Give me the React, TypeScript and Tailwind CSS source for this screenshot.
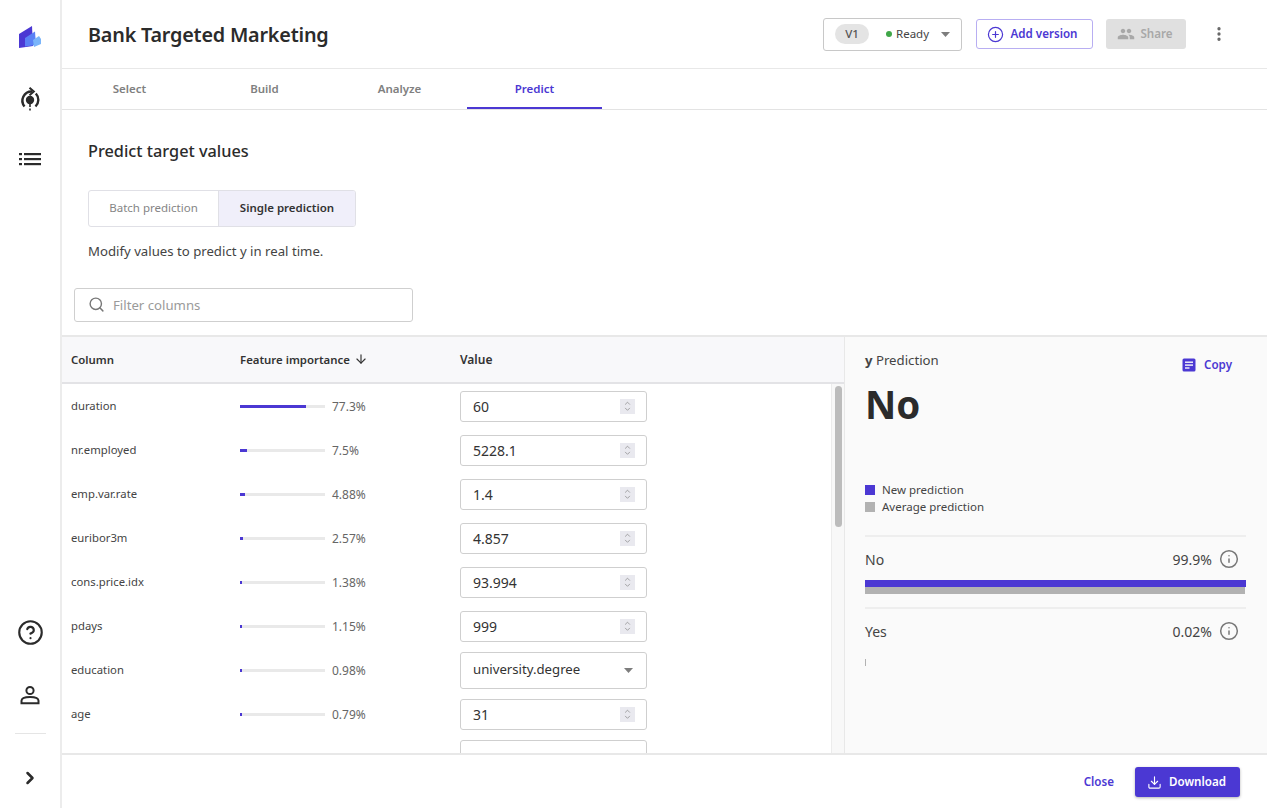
import { ChevronDown, ChevronRight, ChevronUp, CircleHelp, Download, EllipsisVertical, Info, Search, ArrowDown, CirclePlus } from 'lucide-react'

const rows = [
  { name: 'duration', pct: '77.3%', fill: 'w-[66px]', value: '60' },
  { name: 'nr.employed', pct: '7.5%', fill: 'w-[7px]', value: '5228.1' },
  { name: 'emp.var.rate', pct: '4.88%', fill: 'w-[5px]', value: '1.4' },
  { name: 'euribor3m', pct: '2.57%', fill: 'w-[3px]', value: '4.857' },
  { name: 'cons.price.idx', pct: '1.38%', fill: 'w-[2px]', value: '93.994' },
  { name: 'pdays', pct: '1.15%', fill: 'w-[2px]', value: '999' },
  { name: 'education', pct: '0.98%', fill: 'w-[2px]', value: 'university.degree', select: true },
  { name: 'age', pct: '0.79%', fill: 'w-[2px]', value: '31' },
]

function Logo() {
  return (
    <svg width="24" height="24" viewBox="0 0 24 24">
      <polygon points="1,9 14,1 15,21 1,23" fill="#4b38d3" />
      <polygon points="7,13 17,6.5 18,20 7,21.5" fill="#5a81f5" />
      <polygon points="15,15 21,11 23,14 23,19 16,22" fill="#7ab5fa" />
    </svg>
  )
}

function ModelIcon() {
  return (
    <svg width="24" height="24" viewBox="0 0 24 24" fill="none" stroke="#2b2b2b" strokeWidth="2.4">
      <path d="M6.5 19.5 A9.2 9.2 0 0 1 14 4.5" />
      <path d="M17.8 6.5 A9.2 9.2 0 0 1 17.5 19.5" />
      <path d="M11.5 0.8 L15.8 4.6 L11.5 8.2" strokeWidth="2" />
      <circle cx="12" cy="13" r="4.2" fill="#2b2b2b" stroke="none" />
      <path d="M12 16 V20 M12 21.5 V23.5" strokeWidth="1.6" />
    </svg>
  )
}

function ListIcon() {
  return (
    <svg width="22" height="14" viewBox="0 0 22 14" fill="#2b2b2b">
      <rect x="0" y="1" width="3" height="2.2" />
      <rect x="5" y="1" width="17" height="2.2" />
      <rect x="0" y="6" width="3" height="2.2" />
      <rect x="5" y="6" width="17" height="2.2" />
      <rect x="0" y="11" width="3" height="2.2" />
      <rect x="5" y="11" width="17" height="2.2" />
    </svg>
  )
}

function UserIcon() {
  return (
    <svg width="20" height="20" viewBox="0 0 20 20" fill="none" stroke="#2b2b2b" strokeWidth="2">
      <circle cx="10" cy="5.5" r="3.6" />
      <path d="M1.5 18.2 V15.8 C1.5 13.2 6 12 10 12 C14 12 18.5 13.2 18.5 15.8 V18.2 Z" />
    </svg>
  )
}

function PeopleIcon() {
  return (
    <svg width="18" height="18" viewBox="0 0 24 24" fill="#a8a8a8">
      <path d="M16 11c1.66 0 2.99-1.34 2.99-3S17.66 5 16 5c-1.66 0-3 1.34-3 3s1.34 3 3 3zm-8 0c1.66 0 2.99-1.34 2.99-3S9.66 5 8 5C6.34 5 5 6.34 5 8s1.34 3 3 3zm0 2c-2.33 0-7 1.17-7 3.5V19h14v-2.5c0-2.33-4.67-3.5-7-3.5zm8 0c-.29 0-.62.02-.97.05 1.16.84 1.97 1.97 1.97 3.45V19h6v-2.5c0-2.33-4.67-3.5-7-3.5z" />
    </svg>
  )
}

function CopyIcon() {
  return (
    <svg width="14" height="14" viewBox="0 0 14 14">
      <rect x="0.5" y="0.5" width="13" height="13" rx="1.5" fill="#4b38d3" />
      <rect x="3" y="3.5" width="8" height="1.4" fill="#fafafa" />
      <rect x="3" y="6.4" width="8" height="1.4" fill="#fafafa" />
      <rect x="3" y="9.3" width="4.5" height="1.4" fill="#fafafa" />
    </svg>
  )
}

function Caret({ className }: { className: string }) {
  return (
    <svg width="9" height="5" viewBox="0 0 9 5" className={className}>
      <polygon points="0,0 9,0 4.5,5" fill="#7d7d7d" />
    </svg>
  )
}

function ValueInput({ value }: { value: string }) {
  return (
    <div className="flex h-[31px] w-[187px] items-center justify-between rounded-[3px] border border-[#cfcfcf] bg-white pr-[11px] pl-3 text-[14px] text-[#333]">
      <span>{value}</span>
      <span className="flex h-[15px] w-[15px] flex-col items-center justify-center bg-[#e9e9ef] text-[#7a7a7a]">
        <ChevronUp size={9} strokeWidth={1.8} className="-mb-px" />
        <ChevronDown size={9} strokeWidth={1.8} className="-mt-px" />
      </span>
    </div>
  )
}

function ValueSelect({ value }: { value: string }) {
  return (
    <div className="flex h-[37px] w-[187px] items-center justify-between rounded-[3px] border border-[#cfcfcf] bg-white pr-3 pl-3 text-[13.2px] text-[#333]">
      <span>{value}</span>
      <Caret className="mr-px" />
    </div>
  )
}

function Row({ row }: { row: (typeof rows)[number] }) {
  return (
    <div className="flex h-[44px] shrink-0 items-center pl-[9px] text-[#444]">
      <div className="w-[169px] text-[11.3px]">{row.name}</div>
      <div className="flex w-[220px] items-center">
        <div className="h-[3px] w-[85px] bg-[#e9e9e9]">
          <div className={`h-[3px] bg-[#4b38d3] ${row.fill}`} />
        </div>
        <span className="ml-[7px] pt-[2px] text-[12px] text-[#666]">{row.pct}</span>
      </div>
      {row.select ? <ValueSelect value={row.value} /> : <ValueInput value={row.value} />}
    </div>
  )
}

function Prediction({ label, pct }: { label: string; pct: string }) {
  return (
    <div className="flex h-[42px] items-center justify-between pt-[2px] pr-[7px] text-[14px] text-[#444]">
      <span>{label}</span>
      <span className="flex items-center gap-[7px]">
        {pct}
        <Info size={20} strokeWidth={1.8} className="text-[#777]" />
      </span>
    </div>
  )
}

export default function App() {
  return (
    <div className="flex h-[808px] w-[1267px] overflow-hidden bg-white font-['Noto_Sans',sans-serif] text-[#2b2b2b]">
      <aside className="flex w-[62px] shrink-0 flex-col items-center border-r-2 border-[#ececec] pt-[25px]">
        <Logo />
        <div className="mt-[38px]"><ModelIcon /></div>
        <div className="mt-[41px]"><ListIcon /></div>
        <div className="mt-auto"><CircleHelp size={27} strokeWidth={1.9} /></div>
        <div className="mt-[39px]"><UserIcon /></div>
        <div className="mt-[28px] h-px w-[31px] bg-[#e5e5e5]" />
        <div className="mt-[34px] mb-[20px]"><ChevronRight size={20} strokeWidth={3} /></div>
      </aside>

      <main className="flex min-w-0 flex-1 flex-col">
        <header className="flex h-[69px] shrink-0 items-center border-b border-[#e8e8e8] pr-[39px] pl-[26px]">
          <h1 className="pt-[2px] text-[19.8px] font-semibold tracking-[-0.2px]">Bank Targeted Marketing</h1>
          <div className="ml-auto flex h-[33px] w-[139px] items-center rounded-[3px] border border-[#c8c8c8] pl-[11px] text-[11.5px]">
            <span className="flex h-5 w-[34px] items-center justify-center rounded-full bg-[#e4e4e4] font-medium text-[#555]">V1</span>
            <span className="ml-[17px] h-[6px] w-[6px] rounded-full bg-[#3fa648]" />
            <span className="ml-[4px] text-[#444]">Ready</span>
            <Caret className="ml-[12px]" />
          </div>
          <button className="ml-[14px] flex h-[30px] w-[117px] items-center justify-center gap-[6px] rounded-[3px] border border-[#b8aef2] pr-[4px] text-[11.6px] font-semibold text-[#4b38d3]">
            <CirclePlus size={17} strokeWidth={1.7} />
            Add version
          </button>
          <button className="ml-[13px] flex h-[30px] w-[80px] items-center justify-center gap-[5px] rounded-[3px] bg-[#e0e0e0] pr-[2px] text-[11.6px] font-semibold text-[#a8a8a8]">
            <PeopleIcon />
            Share
          </button>
          <EllipsisVertical size={18} strokeWidth={2.4} className="ml-[24px] text-[#666]" />
        </header>

        <nav className="flex h-[41px] shrink-0 border-b border-[#e3e3e3] text-[11.5px] font-semibold text-[#808080]">
          <div className="flex w-[135px] items-center justify-center">Select</div>
          <div className="flex w-[135px] items-center justify-center">Build</div>
          <div className="flex w-[135px] items-center justify-center">Analyze</div>
          <div className="flex w-[135px] items-center justify-center border-b-2 border-[#4b38d3] pt-[2px] text-[#4b38d3]">Predict</div>
        </nav>

        <section className="h-[225px] shrink-0 px-[12px] pt-[30px]">
          <h2 className="ml-[14px] text-[16.3px] leading-[22px] font-medium">Predict target values</h2>
          <div className="mt-[28px] ml-[14px] flex h-[37px] w-[268px] overflow-hidden rounded-[3px] border border-[#e0e0e6] text-[11.5px]">
            <div className="flex w-[129px] items-center justify-center pb-[2px] text-[#858585]">Batch prediction</div>
            <div className="flex flex-1 items-center justify-center border-l border-[#e0e0e6] bg-[#f0effa] pb-[2px] font-semibold text-[#333]">Single prediction</div>
          </div>
          <p className="mt-[14px] ml-[14px] text-[13.2px] leading-[20px] text-[#444]">Modify values to predict y in real time.</p>
          <div className="mt-[27px] flex h-[34px] w-[339px] items-center rounded-[3px] border border-[#cfcfcf] pb-[2px] pl-[13px] text-[13.2px] text-[#9a9a9a]">
            <Search size={17} strokeWidth={2} className="mr-[8px] text-[#777]" />
            <span className="pt-[4px]">Filter columns</span>
          </div>
        </section>

        <div className="flex min-h-0 flex-1 border-t-2 border-[#e8e8e8]">
          <div className="flex w-[782px] shrink-0 flex-col">
            <div className="flex h-[47px] shrink-0 items-center border-b-2 border-[#e3e3e6] bg-[#f8f8fa] pl-[9px] text-[11.4px] font-semibold text-[#333]">
              <div className="w-[169px]">Column</div>
              <div className="flex w-[220px] items-center gap-[4px]">
                Feature importance
                <ArrowDown size={14} strokeWidth={2} />
              </div>
              <div className="text-[12px]">Value</div>
            </div>
            <div className="flex min-h-0 flex-1">
              <div className="min-w-0 flex-1 overflow-hidden">
                {rows.map(row => <Row key={row.name} row={row} />)}
                <div className="flex h-[44px] items-center pl-[398px]">
                  <div className="h-[37px] w-[187px] shrink-0 rounded-[3px] border border-[#cfcfcf]" />
                </div>
              </div>
              <div className="w-[13px] shrink-0 border-l border-[#ececec] bg-[#f8f8f8] px-[3px] pt-[2px]">
                <div className="h-[141px] w-[7px] rounded-full bg-[#bcbcbc]" />
              </div>
            </div>
          </div>

          <div className="flex-1 border-l border-[#e8e8e8] bg-[#fafafa] pr-[21px] pl-[20px]">
            <div className="flex items-start justify-between pt-[13px]">
              <span className="text-[13.2px] leading-[20px] text-[#444]"><span className="font-bold">y</span> Prediction</span>
              <span className="mt-[6px] mr-[14px] flex items-center gap-[8px] text-[11.6px] font-semibold text-[#4b38d3]"><CopyIcon />Copy</span>
            </div>
            <div className="mt-[4px] text-[38.5px] leading-[54px] font-bold">No</div>
            <div className="mt-[51px] flex flex-col gap-[1px] text-[11.5px] leading-[16px] text-[#444]">
              <div className="flex items-center gap-[7px]"><span className="h-[10px] w-[10px] bg-[#4b38d3]" />New prediction</div>
              <div className="flex items-center gap-[7px]"><span className="h-[10px] w-[10px] bg-[#b2b2b2]" />Average prediction</div>
            </div>
            <div className="mt-[20px] border-t-2 border-[#eeeeee]">
              <Prediction label="No" pct="99.9%" />
              <div className="mt-px h-[7px] bg-[#4b38d3]" />
              <div className="h-[7px] w-[380px] bg-[#b2b2b2]" />
            </div>
            <div className="mt-[13px] border-t-2 border-[#eeeeee]">
              <Prediction label="Yes" pct="0.02%" />
              <div className="mt-[8px] h-[7px] w-px bg-[#b2b2b2]" />
            </div>
          </div>
        </div>

        <footer className="flex h-[55px] shrink-0 items-center justify-end border-t-2 border-[#e8e8e8] pt-px pr-[27px] text-[11.6px] font-semibold">
          <span className="text-[#4b38d3]">Close</span>
          <button className="ml-[21px] flex h-[30px] w-[105px] items-center justify-center gap-[7px] rounded-[3px] bg-[#4b38d3] pr-[2px] text-white shadow-[0_1px_3px_rgba(0,0,0,0.3)]">
            <Download size={15} strokeWidth={1.8} />
            Download
          </button>
        </footer>
      </main>
    </div>
  )
}
